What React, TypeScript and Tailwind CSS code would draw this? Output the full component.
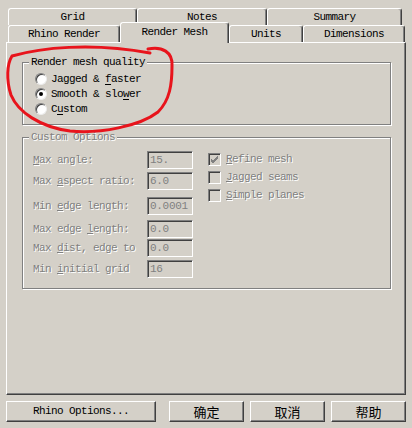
import React from 'react'

const mono = "font-['Liberation_Mono',monospace] text-[11px] tracking-[-0.6px]"
const dim = 'text-[#808080] [text-shadow:1px_1px_0_#ffffff]'

function Tab({ label, w, selected }: { label: string; w: string; selected?: boolean }) {
  return (
    <div
      className={`${w} ${
        selected ? 'h-[21px] relative top-px z-20 pt-[2px]' : 'h-[17px] pt-[1px]'
      } flex justify-center items-start bg-[#d4d0c8] border-t border-l border-t-white border-l-white border-r border-r-[#404040] shadow-[inset_-1px_0_0_#808080] rounded-t-[3px] leading-[14px] text-black`}
    >
      {label}
    </div>
  )
}

function Radio({ checked, children }: { checked?: boolean; children: React.ReactNode }) {
  return (
    <div className="flex items-center h-[15px]">
      <div className="w-[12px] h-[12px] rounded-full bg-white border border-t-[#808080] border-l-[#808080] border-b-[#ececec] border-r-[#ececec] shadow-[inset_1px_1px_0_#404040] flex items-center justify-center">
        {checked && <div className="w-[4px] h-[4px] rounded-full bg-black" />}
      </div>
      <span className="ml-[4px] leading-[14px]">{children}</span>
    </div>
  )
}

function Field({ label, value, mt }: { label: React.ReactNode; value: string; mt: string }) {
  return (
    <div className={`flex items-center h-[18px] ${mt}`}>
      <div className={`w-[114px] leading-[14px] ${dim}`}>{label}</div>
      <div className="w-[46px] h-[18px] border border-t-[#808080] border-l-[#808080] border-b-white border-r-white shadow-[inset_1px_1px_0_#404040] pl-[2px] flex items-center text-[#808080] leading-[14px] tracking-[-0.3px]">
        {value}
      </div>
    </div>
  )
}

function Check({ checked, children }: { checked?: boolean; children: React.ReactNode }) {
  return (
    <div className="flex items-center h-[18px]">
      <div className="w-[13px] h-[13px] border border-t-[#808080] border-l-[#808080] border-b-white border-r-white shadow-[inset_1px_1px_0_#404040] flex items-center justify-center">
        {checked && (
          <svg width="9" height="9" viewBox="0 0 9 9">
            <path d="M1 4 L3 6 L8 1 M1 5 L3 7 L8 2 M1 6 L3 8 L8 3" stroke="#808080" strokeWidth="1" fill="none" />
          </svg>
        )}
      </div>
      <span className={`ml-[5px] leading-[14px] ${dim}`}>{children}</span>
    </div>
  )
}

function Button({ w, ml, children, cjk }: { w: string; ml: string; children: React.ReactNode; cjk?: boolean }) {
  return (
    <div
      className={`${w} ${ml} h-[21px] border border-t-white border-l-white border-b-[#404040] border-r-[#404040] shadow-[inset_-1px_-1px_0_#808080] flex items-center justify-center text-black ${
        cjk ? "font-['Noto_Sans_CJK_SC',sans-serif] text-[13px] tracking-normal" : ''
      }`}
    >
      {children}
    </div>
  )
}

export default function App() {
  return (
    <div className={`w-[412px] h-[428px] bg-[#d4d0c8] relative overflow-hidden ${mono}`}>
      {/* tabs */}
      <div className="pt-[8px] pl-[8px]">
        <div className="flex">
          <Tab label="Grid" w="w-[129px]" />
          <Tab label="Notes" w="w-[130px]" />
          <Tab label="Summary" w="w-[135px]" />
        </div>
        <div className="flex items-end h-[17px] relative z-10">
          <Tab label="Rhino Render" w="w-[112px]" />
          <Tab label="Render Mesh" w="w-[109px]" selected />
          <Tab label="Units" w="w-[74px]" />
          <Tab label="Dimensions" w="w-[102px]" />
        </div>
      </div>

      {/* page */}
      <div className="relative ml-[6px] w-[400px] h-[353px] border border-t-white border-l-white border-b-[#404040] border-r-[#404040] shadow-[inset_-1px_-1px_0_#808080] pt-[19px] pl-[15px]">
        <div className="relative w-[369px] h-[63px] border border-[#808080] shadow-[1px_1px_0_#ffffff,inset_1px_1px_0_#ffffff] pt-[8px] pl-[12px] text-black">
          <span className="absolute -top-[8px] left-[6px] px-[2px] bg-[#d4d0c8] leading-[14px]">Render mesh quality</span>
          <Radio>
            Jagged &amp; <u className="underline-offset-2">f</u>aster
          </Radio>
          <Radio checked>
            Smooth &amp; slo<u className="underline-offset-2">w</u>er
          </Radio>
          <Radio>
            C<u className="underline-offset-2">u</u>stom
          </Radio>
        </div>

        <div className="relative mt-[12px] w-[369px] h-[152px] border border-[#808080] shadow-[1px_1px_0_#ffffff,inset_1px_1px_0_#ffffff] pt-[13px] pl-[10px] flex">
          <span className={`absolute -top-[8px] left-[6px] px-[2px] bg-[#d4d0c8] leading-[14px] ${dim}`}>Custom Options</span>
          <div className="flex flex-col">
            <Field mt="mt-0" value="15." label={<><u>M</u>ax angle:</>} />
            <Field mt="mt-[3px]" value="6.0" label={<>Max <u>a</u>spect ratio:</>} />
            <Field mt="mt-[7px]" value="0.0001" label={<>Min <u>e</u>dge length:</>} />
            <Field mt="mt-[5px]" value="0.0" label={<>Max edge <u>l</u>ength:</>} />
            <Field mt="mt-[1px]" value="0.0" label={<>Max <u>d</u>ist, edge to</>} />
            <Field mt="mt-[3px]" value="16" label={<>Min <u>i</u>nitial grid</>} />
          </div>
          <div className="flex flex-col ml-[15px] -mt-[1px]">
            <Check checked>
              <u>R</u>efine mesh
            </Check>
            <Check>
              <u>J</u>agged seams
            </Check>
            <Check>
              <u>S</u>imple planes
            </Check>
          </div>
        </div>
      </div>

      {/* buttons */}
      <div className="flex mt-[6px] pl-[6px]">
        <Button w="w-[150px]" ml="ml-0">Rhino Options...</Button>
        <Button w="w-[75px]" ml="ml-[13px]" cjk>确定</Button>
        <Button w="w-[75px]" ml="ml-[6px]" cjk>取消</Button>
        <Button w="w-[75px]" ml="ml-[6px]" cjk>帮助</Button>
      </div>

      {/* red hand-drawn mark */}
      <svg className="absolute left-0 top-0 pointer-events-none z-30" width="412" height="428" viewBox="0 0 412 428">
        <path
          d="M148 49 C162 46 173 52 172 66 C172 84 170 100 158 112 C140 126 100 134 70 131 C40 127 18 112 11 95 C6 80 7 64 12 56 C40 48 90 42 150 53"
          stroke="#e8141c"
          strokeWidth="3"
          fill="none"
          strokeLinecap="round"
        />
      </svg>
    </div>
  )
}
